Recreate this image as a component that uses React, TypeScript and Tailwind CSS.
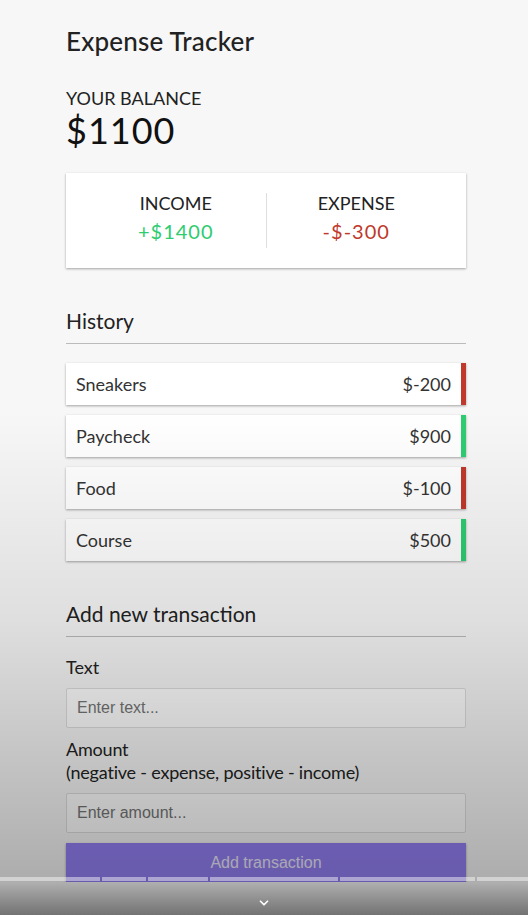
import { ChevronDown } from "lucide-react"

type Tx = { id: number; text: string; amount: number }

const transactions: Tx[] = [
  { id: 1, text: "Sneakers", amount: -200 },
  { id: 2, text: "Paycheck", amount: 900 },
  { id: 3, text: "Food", amount: -100 },
  { id: 4, text: "Course", amount: 500 },
]

// chapter widths of the video progress bar
const chapters = [101, 44, 61, 129, 136, 51]

export default function App() {
  return (
    <div className="relative h-[915px] w-[528px] overflow-hidden bg-[#f7f7f7] font-['Lato','Noto_Sans',sans-serif] text-[18px] text-[#222]">
      <div className="ml-[66px] w-[400px] pt-[27px]">
        <h2 className="text-[26px] leading-[29px] font-medium tracking-[0.2px] text-[#222]">Expense Tracker</h2>

        <h4 className="mt-[32px] text-[18px] leading-[21px] uppercase text-[#222]">Your Balance</h4>
        <h1 className="text-[36px] leading-[43px] tracking-[1px] text-[#111]">$1100</h1>

        <div className="mt-[21px] flex bg-white p-5 shadow-[0_1px_3px_rgba(0,0,0,0.12),0_1px_2px_rgba(0,0,0,0.24)]">
          <div className="flex-1 border-r border-[#dedede] text-center">
            <h4 className="text-[18px] leading-[21px] uppercase text-[#222]">Income</h4>
            <p className="my-[5px] text-[20px] leading-[24px] tracking-[1px] text-[#2ecc71]">+$1400</p>
          </div>
          <div className="flex-1 text-center">
            <h4 className="text-[18px] leading-[21px] uppercase text-[#222]">Expense</h4>
            <p className="my-[5px] text-[20px] leading-[24px] tracking-[1px] text-[#c0392b]">-$-300</p>
          </div>
        </div>

        <h3 className="mt-[40px] border-b border-[#bbb] pb-[10px] text-[21px] leading-[25px] text-[#222]">History</h3>
        <ul className="mt-[19px] flex flex-col gap-[10px]">
          {transactions.map((t) => (
            <li
              key={t.id}
              className={`flex h-[42px] items-center justify-between bg-white pr-[10px] pl-[10px] text-[18px] text-[#333] shadow-[0_1px_3px_rgba(0,0,0,0.12),0_1px_2px_rgba(0,0,0,0.24)] ${
                t.amount < 0 ? "border-r-[5px] border-[#c0392b]" : "border-r-[5px] border-[#2ecc71]"
              }`}
            >
              <span>{t.text}</span>
              <span>${t.amount}</span>
            </li>
          ))}
        </ul>

        <h3 className="mt-[40px] border-b border-[#bbb] pb-[10px] text-[21px] leading-[25px] text-[#222]">Add new transaction</h3>
        <form className="mt-[10px]">
          <div>
            <label className="my-[10px] inline-block leading-[21px]">Text</label>
            <input
              type="text"
              placeholder="Enter text..."
              className="block h-[40px] w-full rounded-[2px] border border-[#dedede] bg-white px-[10px] font-['Liberation_Sans',Arial,sans-serif] text-[16px] placeholder:text-[#757575]"
            />
          </div>
          <div>
            <label className="my-[10px] inline-block leading-[22.5px] tracking-[-0.2px]">
              Amount <br />
              (negative - expense, positive - income)
            </label>
            <input
              type="number"
              placeholder="Enter amount..."
              className="block h-[40px] w-full rounded-[2px] border border-[#dedede] bg-white px-[10px] font-['Liberation_Sans',Arial,sans-serif] text-[16px] placeholder:text-[#757575]"
            />
          </div>
          <button
            type="button"
            className="mt-[10px] block h-[40px] w-full bg-[#9480f5] font-['Liberation_Sans',Arial,sans-serif] text-[16px] text-white/85 shadow-[0_1px_3px_rgba(0,0,0,0.12),0_1px_2px_rgba(0,0,0,0.24)]"
          >
            Add transaction
          </button>
        </form>
      </div>

      {/* video player shading over the page */}
      <div className="pointer-events-none absolute inset-0 bg-linear-to-b from-transparent from-45% via-black/10 via-68% to-black/30 to-96%" />

      {/* player controls */}
      <div className="absolute inset-x-0 bottom-0 flex h-[38px] flex-col">
        <div className="flex h-[5px] gap-[2px]">
          {chapters.map((w, i) => (
            <div key={i} className="h-[4px] bg-white/45" style={{ width: w }} />
          ))}
        </div>
        <div className="flex flex-1 justify-center bg-linear-to-b from-[#b0b0b0] to-[#737373] pt-[14px]">
          <ChevronDown className="h-[14px] w-[14px] text-white" strokeWidth={3} />
        </div>
      </div>
    </div>
  )
}
